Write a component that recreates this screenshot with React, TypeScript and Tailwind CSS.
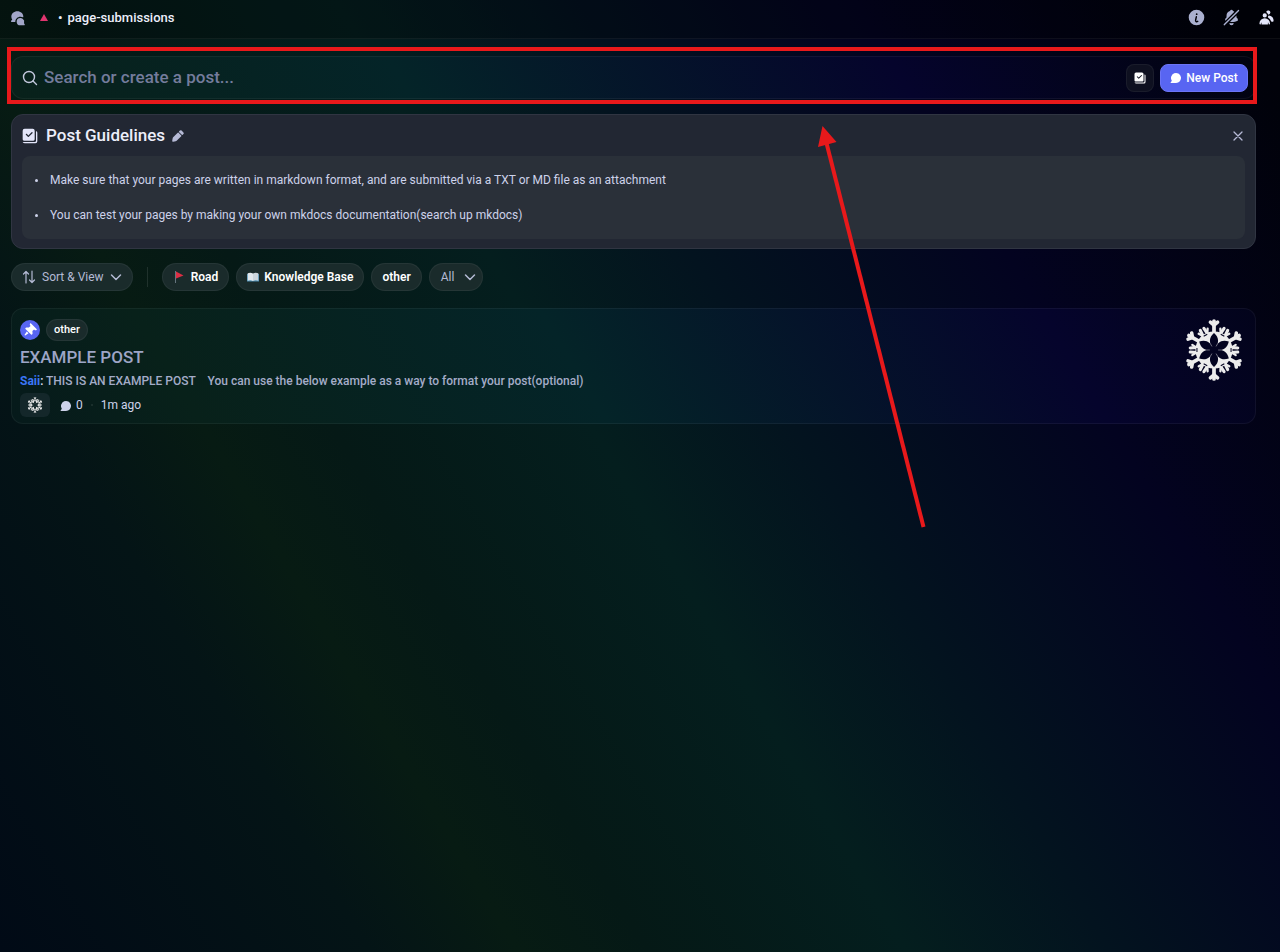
import React from 'react';

const icons = {
  forum:
    'M18.91 12.98a5.45 5.45 0 0 1 2.18 6.2c-.1.33-.09.68.1.96l.83 1.32a1 1 0 0 1-.84 1.54h-5.5A5.6 5.6 0 0 1 10 17.5a5.6 5.6 0 0 1 5.68-5.5c1.2 0 2.32.36 3.23.98Z M19.24 10.86c.32.16.72-.02.74-.38L20 10c0-4.42-4.03-8-9-8s-9 3.58-9 8c0 1.5.47 2.91 1.28 4.11.14.21.12.49-.06.67l-1.51 1.51A1 1 0 0 0 2.4 18h5.1a.5.5 0 0 0 .49-.5c0-4.2 3.5-7.5 7.68-7.5 1.28 0 2.5.3 3.56.86Z',
  info: 'M23 12a11 11 0 1 1-22 0 11 11 0 0 1 22 0Zm-9.5-4.75a1.25 1.25 0 1 1-2.5 0 1.25 1.25 0 0 1 2.5 0Zm-.77 3.96a1 1 0 1 0-1.96-.42l-1.04 4.86a2.77 2.77 0 0 0 4.31 2.83l.24-.17a1 1 0 1 0-1.16-1.62l-.24.17a.77.77 0 0 1-1.2-.79l1.05-4.86Z',
  bellOff:
    'M1.3 21.3a1 1 0 1 0 1.4 1.4l20-20a1 1 0 0 0-1.4-1.4l-20 20ZM3.13 16.13c.11.27.46.28.66.08L15.73 4.27a.47.47 0 0 0-.07-.74 6.97 6.97 0 0 0-1.35-.64.62.62 0 0 1-.38-.43 2 2 0 0 0-3.86 0 .62.62 0 0 1-.38.43A7 7 0 0 0 5 9.5v2.09a.5.5 0 0 1-.13.33l-1.1 1.22A3 3 0 0 0 3 15.15v.28c0 .24.04.48.13.7ZM18.64 9.36c.13-.13.36-.05.36.14v2.09c0 .12.05.24.13.33l1.1 1.22a3 3 0 0 1 .77 2.01v.28c0 .67-.34 1.29-.95 1.56-1.31.6-4 1.51-8.05 1.51-.46 0-.9-.01-1.33-.03a.48.48 0 0 1-.3-.83l8.27-8.28ZM9.18 19.84A.16.16 0 0 0 9 20a3 3 0 1 0 6 0c0-.1-.09-.17-.18-.16a24.84 24.84 0 0 1-5.64 0Z',
  members:
    'M14.5 8a3 3 0 1 0-2.7-4.3c-.2.4.06.86.44 1.12a5 5 0 0 1 2.14 3.08c.01.06.06.1.12.1ZM18.44 17.27c.15.43.54.73 1 .73h1.06c.83 0 1.5-.67 1.5-1.5a7.5 7.5 0 0 0-6.5-7.43c-.55-.08-.99.38-1.1.92-.06.3-.15.6-.26.87-.23.58-.05 1.3.47 1.63a9.53 9.53 0 0 1 3.83 4.78ZM12.5 9a3 3 0 1 1-6 0 3 3 0 0 1 6 0ZM2 20.5a7.5 7.5 0 0 1 15 0c0 .83-.67 1.5-1.5 1.5a.2.2 0 0 1-.2-.16c-.2-.96-.56-1.87-.88-2.54-.1-.23-.42-.15-.42.1v2.1a.5.5 0 0 1-.5.5h-8a.5.5 0 0 1-.5-.5v-2.1c0-.25-.31-.33-.42-.1-.32.67-.67 1.58-.88 2.54a.2.2 0 0 1-.2.16A1.5 1.5 0 0 1 2 20.5Z',
  guidelines:
    'M4 1h12a3 3 0 0 1 3 3v13a2 2 0 0 1-2 2H3a2 2 0 0 1-2-2V4a3 3 0 0 1 3-3Zm11.7 5.3a1 1 0 0 0-1.4 0L9.5 11.1 7.2 8.8a1 1 0 0 0-1.4 1.4l3 3a1 1 0 0 0 1.4 0l5.5-5.5a1 1 0 0 0 0-1.4ZM21 5a2 2 0 0 1 2 2v13a3 3 0 0 1-3 3H5a4 4 0 0 1-4-2h18a2 2 0 0 0 2-2V5Z',
  chat: 'M12 22a10 10 0 1 0-8.45-4.64c.13.19.11.44-.04.61l-2.06 2.37A1 1 0 0 0 2.2 22H12Z',
  pencil:
    'm13.96 5.46 4.58 4.58a1 1 0 0 0 1.42 0l1.38-1.38a2 2 0 0 0 0-2.82l-3.18-3.18a2 2 0 0 0-2.82 0l-1.38 1.38a1 1 0 0 0 0 1.42ZM2.11 20.16l.73-4.22a3 3 0 0 1 .83-1.61l7.87-7.87a1 1 0 0 1 1.42 0l4.58 4.58a1 1 0 0 1 0 1.42l-7.87 7.87a3 3 0 0 1-1.6.83l-4.23.73a1.5 1.5 0 0 1-1.73-1.73Z',
  pin: 'M19.38 11.38a3 3 0 0 0 4.24 0l.03-.03a.5.5 0 0 0 0-.7L13.35.35a.5.5 0 0 0-.7 0l-.03.03a3 3 0 0 0 0 4.24L13 5l-2.92 2.92-3.65-.34a2 2 0 0 0-1.6.58l-.62.63a1 1 0 0 0 0 1.42l9.58 9.58a1 1 0 0 0 1.42 0l.63-.63a2 2 0 0 0 .58-1.6l-.34-3.64L19 11l.38.38ZM9.07 17.07a.5.5 0 0 1-.08.77l-5.15 3.43a.5.5 0 0 1-.63-.06l-.42-.42a.5.5 0 0 1-.06-.63L6.16 15a.5.5 0 0 1 .77-.08l2.14 2.14Z',
};

const Icon: React.FC<{ name: keyof typeof icons; className: string }> = ({ name, className }) => (
  <svg viewBox="0 0 24 24" fill="currentColor" fillRule="evenodd" className={className} aria-hidden="true">
    <path d={icons[name]} />
  </svg>
);

const Chevron: React.FC = () => (
  <svg viewBox="0 0 12 12" fill="none" stroke="currentColor" strokeWidth="1.5" strokeLinecap="round" strokeLinejoin="round" className="size-3" aria-hidden="true">
    <path d="M1.5 4 6 8.5 10.5 4" />
  </svg>
);

const Snowflake: React.FC<{ className: string }> = ({ className }) => {
  const turns = [0, 60, 120, 180, 240, 300];
  return (
    <svg viewBox="-30 -30 60 60" className={className} role="img" aria-label="Snowflake">
      <mask id="petals" maskUnits="userSpaceOnUse" x="-30" y="-30" width="60" height="60">
        <rect x="-30" y="-30" width="60" height="60" fill="white" />
        {turns.map((turn) => (
          <g key={turn} transform={`rotate(${turn})`}>
            <path d="M0 0C-5.5-7-5-12 0-16.5C5-12 5.5-7 0 0Z" fill="black" />
            <path d="M-2-16.5H2" stroke="black" strokeWidth="1" transform="rotate(30)" />
          </g>
        ))}
        <circle r="8" fill="black" />
      </mask>
      <g mask="url(#petals)" fill="#ececec" stroke="#ececec">
        <circle r="18" stroke="none" />
        {turns.map((turn) => (
          <g key={turn} transform={`rotate(${turn})`} strokeLinecap="round" fill="none">
            <path d="M0-17V-28" strokeWidth="3.6" />
            <path d="M-3.5-27 0-24 3.5-27" strokeWidth="3.4" />
            <g transform="rotate(30)">
              <path d="M-2.5-16-2-23M2.5-16 2-23" strokeWidth="3" />
              <path d="M-5-21-3-18M5-21 3-18" strokeWidth="2.2" />
            </g>
          </g>
        ))}
      </g>
      {turns.map((turn) => (
        <path key={turn} d="M0-4V-9" stroke="#ececec" strokeOpacity="0.5" strokeWidth="0.8" transform={`rotate(${turn + 30})`} />
      ))}
    </svg>
  );
};

const chip = 'flex h-7 items-center rounded-full border border-white/5 bg-[#1a2b2b] text-xs';

const panel =
  'rounded-xl border border-white/5 bg-[linear-gradient(239deg,#01030f_3%,#05042c_23%,#042428_50%,#08211a_72%,#020d1c_100%)] bg-fixed';

const Header: React.FC = () => (
  <header className="flex h-[39px] items-center border-b border-white/5 bg-black/25 pl-2.5 pr-[5px] pb-[3px]">
    <Icon name="forum" className="size-4 text-[#a2a6c8]" />
    <svg viewBox="0 0 8 7" className="ml-3.5 h-[7px] w-2" aria-hidden="true">
      <path d="M4 0 8 7H0Z" fill="#e0356f" />
    </svg>
    <h1 className="ml-2.5 flex gap-[5px] text-[13px] font-medium text-[#eceefa]">
      <span>•</span>
      page-submissions
    </h1>
    <div className="ml-auto flex items-center gap-[18px]">
      <button type="button" aria-label="Channel info" className="text-[#aab0d0]">
        <Icon name="info" className="size-[17px]" />
      </button>
      <button type="button" aria-label="Notifications" className="text-[#aab0d0]">
        <Icon name="bellOff" className="size-[17px]" />
      </button>
      <button type="button" aria-label="Members" className="text-[#e4e6fa]">
        <Icon name="members" className="size-[17px]" />
      </button>
    </div>
  </header>
);

const SearchBar: React.FC = () => (
  <div className="relative">
    <form className={`${panel} flex h-[43px] items-center px-[7px]`}>
      <label htmlFor="search" className="pl-[3px] text-[#c3c8dd]">
        <svg viewBox="0 0 16 16" fill="none" stroke="currentColor" strokeWidth="1.4" strokeLinecap="round" className="size-4" aria-hidden="true">
          <circle cx="7" cy="7" r="5.5" />
          <path d="m11 11 3.5 3.5" />
        </svg>
      </label>
      <input
        id="search"
        type="text"
        aria-label="Search or create a post"
        placeholder="Search or create a post..."
        className="ml-1.5 min-w-0 flex-1 bg-transparent text-[17px] font-medium text-white outline-none placeholder:text-[#747c9c]"
      />
      <button type="button" aria-label="Guidelines" className="flex size-7 items-center justify-center rounded-lg border border-white/5 bg-[#0e1020] text-white">
        <Icon name="guidelines" className="size-3" />
      </button>
      <button type="button" className="ml-1.5 flex h-7 w-22 items-center justify-center gap-1 rounded-lg border border-[#6c75f5] bg-[#5865f2] text-xs font-medium text-white">
        <Icon name="chat" className="size-3" />
        New Post
      </button>
    </form>
    {/* highlight frame */}
    <div className="pointer-events-none absolute -top-[9px] -right-px -bottom-[5px] -left-1 border-4 border-[#e8191b]" />
  </div>
);

const Guidelines: React.FC = () => (
  <section className="mt-[15px] rounded-xl border border-[#303542] bg-[#222733] px-2.5 pb-[9px]">
    <div className="flex h-[41px] items-center">
      <Icon name="guidelines" className="size-4 text-[#e4e6fa]" />
      <h2 className="ml-2 text-[17px] font-medium text-[#eceefa]">Post Guidelines</h2>
      <button type="button" aria-label="Edit guidelines" className="ml-1.5 text-[#b6bad6]">
        <Icon name="pencil" className="size-3.5" />
      </button>
      <button type="button" aria-label="Close" className="ml-auto text-[#b6bad6]">
        <svg viewBox="0 0 14 14" stroke="currentColor" strokeWidth="1.3" strokeLinecap="round" className="size-3.5" aria-hidden="true">
          <path d="m3 3 8 8M11 3l-8 8" />
        </svg>
      </button>
    </div>
    <ul className="flex flex-col gap-[19px] rounded-lg bg-[#2a3039] px-[13px] py-4 text-xs text-[#cdd2ea]">
      <li className="flex items-center gap-3 before:size-[3px] before:rounded-full before:bg-[#cdd2ea]">
        Make sure that your pages are written in markdown format, and are submitted via a TXT or MD file as an attachment
      </li>
      <li className="flex items-center gap-3 before:size-[3px] before:rounded-full before:bg-[#cdd2ea]">
        You can test your pages by making your own mkdocs documentation(search up mkdocs)
      </li>
    </ul>
  </section>
);

const Filters: React.FC = () => (
  <div className="mt-3.5 flex items-center">
    <button type="button" className={`${chip} gap-1.5 px-2.5 text-[#b4bad4]`}>
      <svg viewBox="0 0 14 14" fill="none" stroke="currentColor" strokeWidth="1.2" strokeLinecap="round" strokeLinejoin="round" className="size-3.5" aria-hidden="true">
        <path d="M4 13V1.5M1.5 4 4 1.5 6.5 4M10 1v11.5M7.5 10l2.5 2.5 2.5-2.5" />
      </svg>
      Sort &amp; View
      <Chevron />
    </button>
    <div className="mx-3.5 h-5 w-px bg-white/10" />
    <div className="flex gap-[7px]">
      <button type="button" className={`${chip} gap-1.5 px-2.5 font-semibold text-white`}>
        <svg viewBox="0 0 12 12" className="size-3" aria-hidden="true">
          <path d="M2 0h1v12H2Z" fill="#66757f" />
          <path d="M3 .5 10.5 4.5 3 7.5Z" fill="#dd2e44" />
        </svg>
        Road
      </button>
      <button type="button" className={`${chip} gap-[5px] px-2.5 font-semibold text-white`}>
        <svg viewBox="0 0 12 12" className="size-3" aria-hidden="true">
          <path d="M0 3h12v7.5H0Z" fill="#4a8fb5" />
          <path d="M.7 2.2Q3.5 1 6 2.5V10Q3.5 8.7.7 9.7Z" fill="#e1e8ed" />
          <path d="M11.3 2.2Q8.5 1 6 2.5V10Q8.5 8.7 11.3 9.7Z" fill="#ccd6dd" />
        </svg>
        Knowledge Base
      </button>
      <button type="button" className={`${chip} px-2.5 font-semibold text-white`}>other</button>
      <button type="button" className={`${chip} gap-2.5 pr-1.5 pl-[11px] text-[#b4bad4]`}>
        All
        <Chevron />
      </button>
    </div>
  </div>
);

const Post: React.FC = () => (
  <article className={`${panel} mt-[17px] flex justify-between pt-2.5 pr-2.5 pb-1.5 pl-2`}>
    <div>
      <div className="flex items-center gap-1.5">
        <span className="flex size-5 items-center justify-center rounded-full bg-[#5865f2] text-white">
          <Icon name="pin" className="size-3.5" />
        </span>
        <span className="flex h-[22px] items-center rounded-full border border-white/5 bg-[#1a2b2b] px-[7px] text-[11px] font-medium text-white">other</span>
      </div>
      <h3 className="mt-1 text-[17px] leading-6 font-medium text-[#9da5c6]">EXAMPLE POST</h3>
      <p className="text-xs leading-6 font-medium whitespace-pre-wrap text-[#a4acc8]">
        <span className="font-bold text-[#3b76f6]">Saii</span>
        <span className="text-[#e4e6fa]">:</span> THIS IS AN EXAMPLE POST{'    '}You can use the below example as a way to format your post(optional)
      </p>
      <div className="flex items-center text-xs text-[#cdd2ea]">
        <button type="button" aria-label="Snowflake reaction" className="flex h-6 w-[30px] items-center justify-center rounded-md bg-[#14272a]">
          <Snowflake className="size-4" />
        </button>
        <Icon name="chat" className="mt-0.5 ml-2.5 size-3" />
        <span className="ml-1">0</span>
        <span className="mx-2 size-0.5 rounded-full bg-white/10" />
        <span>1m ago</span>
      </div>
    </div>
    <Snowflake className="size-[62px]" />
  </article>
);

const App: React.FC = () => {
  return (
    <div className="relative min-h-screen overflow-x-hidden bg-[linear-gradient(239deg,#01020a_3%,#030320_23%,#03131f_40%,#041e1e_51%,#051916_65%,#071b13_72%,#041416_80%,#010a16_100%)] font-['Roboto','Liberation_Sans',sans-serif]">
      <Header />
      <main className="pt-[17px] pr-6 pl-[11px]">
        <SearchBar />
        <Guidelines />
        <Filters />
        <Post />
      </main>
      {/* pointer towards the search bar */}
      <svg viewBox="0 0 110 404" className="pointer-events-none absolute top-[125px] left-[816px] h-[404px] w-[110px]" aria-hidden="true">
        <path d="M107.5 402 10.5 18" stroke="#e8191b" strokeWidth="4" />
        <path d="M6.5 1 2 22 20.5 17Z" fill="#e8191b" />
      </svg>
    </div>
  );
};

export default App;
